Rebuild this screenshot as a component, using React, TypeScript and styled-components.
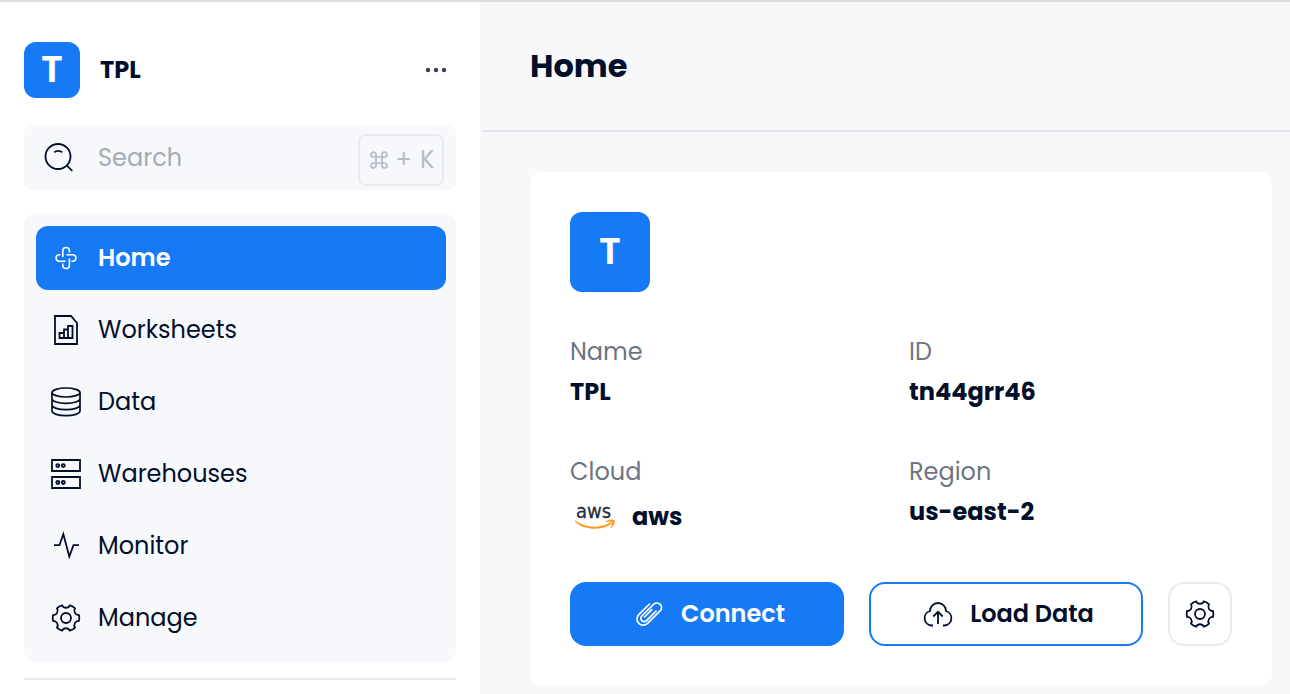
import React from "react";
import styled, { createGlobalStyle, css } from "styled-components";

const GlobalStyle = createGlobalStyle`
  *, *::before, *::after { box-sizing: border-box; }
  body {
    margin: 0;
    background: #f7f8fa;
    color: #020f2a;
    font-family: Poppins, Inter, "Liberation Sans", sans-serif;
    font-size: 24px;
    line-height: 32px;
  }
  button, input { font: inherit; color: inherit; }
  svg { flex: none; }
  h1, dl, dd, ul { margin: 0; padding: 0; }
`;

const Shell = styled.div`
  display: flex;
  min-height: 100vh;
  border-top: 2px solid #dcdcdd;
`;

const Sidebar = styled.aside`
  flex: 0 0 480px;
  min-width: 0;
  padding: 40px 24px 0;
  background: #fff;
`;

const Account = styled.div`
  display: flex;
  align-items: center;
  gap: 20px;
  margin-bottom: 28px;
`;

const AccountName = styled.span`
  flex: 1;
  font-weight: 700;
`;

const Tile = styled.span<{ $size: number }>`
  display: flex;
  align-items: center;
  justify-content: center;
  width: ${(p) => p.$size}px;
  height: ${(p) => p.$size}px;
  padding-bottom: 2px;
  border-radius: 12px;
  background: #1679f5;
  color: #fff;
  font-family: "Noto Sans", sans-serif;
  font-size: 36px;
  font-weight: 700;
`;

const MoreButton = styled.button`
  display: flex;
  padding: 8px;
  border: 0;
  background: none;
`;

const SearchBox = styled.label`
  display: flex;
  align-items: center;
  height: 64px;
  padding: 0 12px 0 16px;
  border-radius: 8px;
  background: #f6f8fc;
`;

const SearchInput = styled.input`
  flex: 1 1 0;
  width: 0;
  min-width: 0;
  margin-left: 24px;
  padding: 0;
  border: 0;
  outline: 0;
  background: none;
  &::placeholder { color: #a6abb5; opacity: 1; }
`;

const Shortcut = styled.kbd`
  display: flex;
  flex: none;
  align-items: center;
  justify-content: center;
  gap: 8px;
  width: 86px;
  height: 52px;
  margin-top: 4px;
  padding-left: 2px;
  border: 2px solid #e8eaee;
  border-radius: 8px;
  color: #b7bbc5;
  font-family: inherit;
`;

const Nav = styled.nav`
  margin-top: 24px;
  padding: 12px 10px 12px 12px;
  border-radius: 12px;
  background: #f6f8fc;
`;

const NavList = styled.ul`
  display: grid;
  gap: 8px;
  list-style: none;
`;

const NavLink = styled.a<{ $active?: boolean }>`
  display: flex;
  align-items: center;
  gap: 16px;
  height: 64px;
  padding: 0 14px;
  border-radius: 12px;
  color: inherit;
  text-decoration: none;
  ${(p) => p.$active && css`
    background: #1679f5;
    color: #fff;
    font-weight: 600;
  `}
`;

const Divider = styled.hr`
  margin: 16px 0 0;
  border: 0;
  border-top: 2px solid #ebebec;
`;

const Main = styled.main`
  flex: 1;
  min-width: 0;
  margin-left: 2px;
  padding-bottom: 8px;
`;

const Header = styled.header`
  display: flex;
  align-items: center;
  height: 130px;
  padding: 0 48px;
  border-bottom: 2px solid #e4e5e8;
`;

const Title = styled.h1`
  font-size: 32px;
  font-weight: 700;
  line-height: 40px;
`;

const Card = styled.section`
  margin: 40px 18px 0 48px;
  padding: 40px;
  border-radius: 12px;
  background: #fff;
`;

const Details = styled.dl`
  display: grid;
  grid-template-columns: 1fr 1fr;
  gap: 40px 16px;
  margin-top: 40px;
`;

const Term = styled.dt`
  line-height: 40px;
  color: #6e7582;
`;

const Value = styled.dd`
  display: flex;
  align-items: center;
  gap: 12px;
  height: 40px;
  font-weight: 700;
`;

const CloudValue = styled(Value)`
  height: 50px;
`;

const Actions = styled.div`
  display: flex;
  gap: 25px;
  margin-top: 40px;
`;

const ActionButton = styled.button<{ $primary?: boolean }>`
  display: flex;
  flex: 1;
  align-items: center;
  justify-content: center;
  gap: 16px;
  height: 64px;
  padding: 0 0 0 4px;
  border: 2px solid #1679f5;
  border-radius: 16px;
  background: ${(p) => (p.$primary ? "#1679f5" : "#fff")};
  color: ${(p) => (p.$primary ? "#fff" : "#020f2a")};
  font-weight: 600;
  white-space: nowrap;
`;

const IconButton = styled(ActionButton)`
  flex: 0 0 64px;
  padding: 0;
  border-color: #ebebec;
`;

const LogoText = styled.text`
  font-family: "DejaVu Sans Condensed", "Noto Sans", sans-serif;
  font-size: 20px;
  font-weight: 400;
`;

function Icon({ children, width = 2 }: { children: React.ReactNode; width?: number }) {
  return (
    <svg width="32" height="32" viewBox="0 0 32 32" fill="none" stroke="currentColor" strokeWidth={width} aria-hidden="true">
      {children}
    </svg>
  );
}

const HomeIcon = () => (
  <Icon width={1.6}>
    <path d="M12.800 15V8.800a3.300 3.300 0 0 1 6.600 0V10.500M16.500 12.800h6.700a3.300 3.300 0 0 1 0 6.500H21.500M19.400 16.500v6.700a3.300 3.300 0 0 1-6.600 0V21.500M15.500 19.300H8.800a3.300 3.300 0 0 1 0-6.500H10.500" />
  </Icon>
);

const WorksheetIcon = () => (
  <Icon width={1.8}>
    <path d="M5 2h16l6 7v21H5zM9.500 19h4.500v5H9.500zM14 15.500h4V24h-4zM18 12h4.500v12H18z" />
  </Icon>
);

const DataIcon = () => (
  <Icon width={1.7}>
    <ellipse cx="16" cy="6.500" rx="14" ry="4.500" />
    <path d="M2 6.500V25c0 2.600 6.300 4.700 14 4.700S30 27.600 30 25V6.500M2 12.700c0 2.600 6.300 4.700 14 4.700s14-2.100 14-4.700M2 19c0 2.600 6.300 4.700 14 4.700S30 21.600 30 19" />
  </Icon>
);

const WarehouseIcon = () => (
  <Icon width={1.8}>
    <path d="M2 2h28v11H2zM2 19h28v11H2z" />
    <g strokeWidth="1.9">
      <circle cx="7.800" cy="7.600" r="1.500" />
      <circle cx="13.300" cy="7.600" r="1.500" />
      <circle cx="7.800" cy="24.500" r="1.500" />
      <circle cx="13.300" cy="24.500" r="1.500" />
    </g>
  </Icon>
);

const MonitorIcon = () => (
  <Icon width={1.8}>
    <path d="M4 15.200h5.500L13.300 4l6 22.500 4.200-11.300H29" />
  </Icon>
);

const gearPath = (() => {
  const at = (deg: number) => {
    const a = (deg * Math.PI) / 180;
    return `${(16 + 13.3 * Math.sin(a)).toFixed(2)} ${(16 - 13.3 * Math.cos(a)).toFixed(2)}`;
  };
  let d = `M${at(-17)}`;
  for (let k = 0; k < 360; k += 60) {
    d += `A4.300 4.300 0 0 0 ${at(k + 17)}A12 12 0 0 1 ${at(k + 43)}`;
  }
  return d + "Z";
})();

const GearIcon = () => (
  <Icon width={1.8}>
    <path d={gearPath} strokeLinejoin="round" />
    <circle cx="16" cy="16" r="5" />
  </Icon>
);

const SearchIcon = () => (
  <svg width="34" height="34" viewBox="0 0 34 34" fill="none" stroke="currentColor" strokeWidth="1.8" aria-hidden="true">
    <circle cx="18" cy="15.500" r="12.500" />
    <path d="M26.800 24.300l5.500 5.700M14.200 11.200q4-2.800 8 0" />
  </svg>
);

const ClipIcon = () => (
  <Icon width={1.7}>
    <path
      strokeLinecap="round"
      d="M16.500 6L5.800 16.700a6.100 6.100 0 0 0 8.700 8.700L27.300 12.700a4.600 4.600 0 0 0-6.500-6.500L8.800 18a3.300 3.300 0 0 0 4.700 4.700L23 13.200M18.800 11.700L11.500 19"
    />
  </Icon>
);

const UploadIcon = () => (
  <Icon width={1.8}>
    <path d="M11 27.500H9.500A7.400 7.400 0 0 1 8 13A8 8 0 0 1 24 13a7.400 7.400 0 0 1-1.500 14.500H21M16 26V14M11.300 18.500l4.700-4.700 4.700 4.700" />
  </Icon>
);

const MoreIcon = () => (
  <svg width="24" height="24" viewBox="0 0 24 24" fill="#39404f" aria-hidden="true">
    <circle cx="4" cy="12" r="2.200" />
    <circle cx="12" cy="12" r="2.200" />
    <circle cx="20" cy="12" r="2.200" />
  </svg>
);

const CommandIcon = () => (
  <svg width="18" height="18" viewBox="0 0 18 18" fill="none" stroke="currentColor" strokeWidth="1.7" aria-hidden="true">
    <path d="M6 6v6M12 6v6M6 6h6M6 12h6M6 6H3.500A2.500 2.500 0 1 1 6 3.500zM12 6h2.500A2.500 2.500 0 1 0 12 3.500zM6 12H3.500A2.500 2.500 0 1 0 6 14.500zM12 12h2.500a2.500 2.500 0 1 1-2.500 2.500z" />
  </svg>
);

const AwsLogo = () => (
  <svg width="50" height="32" viewBox="0 0 50 32" fill="none" overflow="visible" aria-hidden="true">
    <LogoText x="6" y="17" fill="#252f3e" stroke="#252f3e" strokeWidth="0.3">aws</LogoText>
    <path d="M5 19.300c10 7.700 26 8.500 36 1.700l1 1.700C31 30.200 14 29.500 5 20.500z" fill="#ff9a1f" />
    <path d="M36 20.300c3-2 7.500-2.200 8.400-1 .9 1.500-.5 5.700-3 7.700l-.8-.4c1-2 1.900-4.500 1.400-5.400-.6-.8-3.800-.5-6-.2z" fill="#ff9a1f" />
  </svg>
);

const links = [
  { label: "Home", icon: HomeIcon, active: true },
  { label: "Worksheets", icon: WorksheetIcon },
  { label: "Data", icon: DataIcon },
  { label: "Warehouses", icon: WarehouseIcon },
  { label: "Monitor", icon: MonitorIcon },
  { label: "Manage", icon: GearIcon },
];

export default function App() {
  return (
    <>
      <GlobalStyle />
      <Shell>
        <Sidebar>
          <Account>
            <Tile $size={56}>T</Tile>
            <AccountName>TPL</AccountName>
            <MoreButton type="button" aria-label="Account options"><MoreIcon /></MoreButton>
          </Account>
          <SearchBox>
            <SearchIcon />
            <SearchInput type="search" placeholder="Search" aria-label="Search" />
            <Shortcut><CommandIcon /><span>+</span><span>K</span></Shortcut>
          </SearchBox>
          <Nav aria-label="Main">
            <NavList>
              {links.map(({ label, icon: Glyph, active }) => (
                <li key={label}>
                  <NavLink href="#" $active={active} aria-current={active ? "page" : undefined}>
                    <Glyph />
                    {label}
                  </NavLink>
                </li>
              ))}
            </NavList>
          </Nav>
          <Divider />
        </Sidebar>
        <Main>
          <Header><Title>Home</Title></Header>
          <Card>
            <Tile $size={80}>T</Tile>
            <Details>
              <div><Term>Name</Term><Value>TPL</Value></div>
              <div><Term>ID</Term><Value>tn44grr46</Value></div>
              <div><Term>Cloud</Term><CloudValue><AwsLogo />aws</CloudValue></div>
              <div><Term>Region</Term><Value>us-east-2</Value></div>
            </Details>
            <Actions>
              <ActionButton type="button" $primary><ClipIcon />Connect</ActionButton>
              <ActionButton type="button"><UploadIcon />Load Data</ActionButton>
              <IconButton type="button" aria-label="Settings"><GearIcon /></IconButton>
            </Actions>
          </Card>
        </Main>
      </Shell>
    </>
  );
}
